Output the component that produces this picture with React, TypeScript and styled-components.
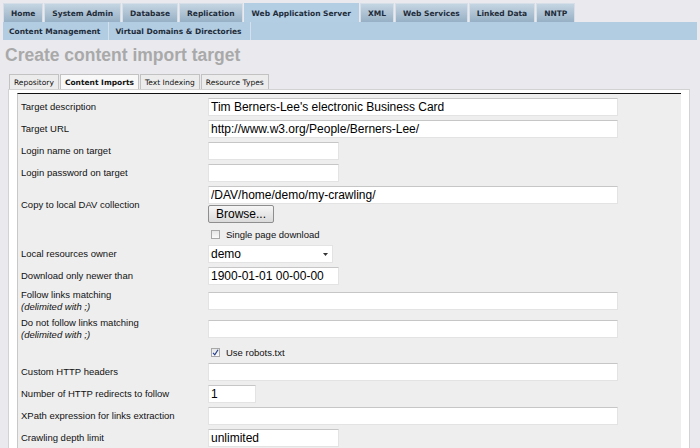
import React from 'react';
import styled, { createGlobalStyle } from 'styled-components';

const Global = createGlobalStyle`
  html, body { margin: 0; padding: 0; background: #eaeaee; }
  body { padding: 3px 3px 0 3px; height: 448px; box-sizing: border-box; overflow: hidden; }
  #root { height: 445px; display: flex; flex-direction: column; }
`;

const TopTabs = styled.div`
  display: flex;
  height: 19px;
  gap: 1px;
  flex: none;
`;

const TopTab = styled.div<{ $active?: boolean }>`
  display: flex;
  align-items: center;
  padding: 0 7px;
  font: bold 7.5px "DejaVu Sans", sans-serif;
  color: #1e2c3a;
  background: ${p => (p.$active ? '#b3cde3' : 'linear-gradient(#c5d5e2, #97b0c5)')};
  border: 1px solid ${p => (p.$active ? '#b3cde3' : '#d6dfe8')};
  border-bottom: none;
`;

const SubBar = styled.div`
  display: flex;
  height: 18px;
  flex: none;
  background: #b2cce2;
`;

const SubTab = styled.div`
  display: flex;
  align-items: center;
  padding: 0 8px 0 6px;
  font: bold 7.5px "DejaVu Sans", sans-serif;
  color: #1e2c3a;
  border-right: 1px solid #d4e1ec;
`;

const Title = styled.h1`
  margin: 4px 0 0 2px;
  font: bold 17.5px "Liberation Sans", Arial, sans-serif;
  color: #a9a9a9;
  line-height: 22px;
  flex: none;
`;

const InnerTabs = styled.div`
  display: flex;
  margin: 8px 0 0 6px;
  height: 15px;
  flex: none;
`;

const InnerTab = styled.div<{ $active?: boolean }>`
  display: flex;
  align-items: center;
  padding: 0 4px;
  font: ${p => (p.$active ? 'bold' : 'normal')} 7.5px "DejaVu Sans", sans-serif;
  color: #111;
  background: ${p => (p.$active ? '#f8f8f8' : '#ececec')};
  border: 1px solid #c2c2c2;
  border-bottom: none;
  margin-right: 1px;
`;

const Panel = styled.div`
  margin-left: 5px;
  width: 682px;
  box-sizing: border-box;
  background: #fff;
  border: 1px solid #d2d2d2;
  border-bottom: none;
  padding: 3px 8px 0 8px;
  flex: 1;
  min-height: 0;
  display: flex;
  flex-direction: column;
  overflow: hidden;
`;

const Form = styled.div`
  flex: 1;
  background: #eeeeee;
  border-top: 1px solid #111;
  border-left: 1px solid #c8c8c8;
  padding: 4px 0 0 3px;
  display: grid;
  grid-template-columns: 187px 1fr;
  row-gap: 4px;
  align-items: center;
  align-content: start;
  overflow: hidden;
`;

const Label = styled.div`
  font: 9.5px/12px "Liberation Sans", Arial, sans-serif;
  color: #111;
`;

const Hint = styled.span`
  font-style: italic;
  display: block;
`;

const Field = styled.div<{ $tall?: boolean }>`
  display: flex;
  flex-direction: column;
  align-items: flex-start;
  min-height: ${p => (p.$tall ? '24px' : '14px')};
  justify-content: center;
`;

const TextInput = styled.input<{ $w: number }>`
  width: ${p => p.$w}px;
  height: 18px;
  box-sizing: border-box;
  margin: 0;
  padding: 0 2px;
  border: 1px solid #e3e3e3;
  border-top-color: #c6c6c6;
  background: #fff;
  font: 12px "Liberation Sans", Arial, sans-serif;
  color: #000;
  outline: none;
`;

const Button = styled.button`
  width: 66px;
  height: 18px;
  margin: 1px 0 0 0;
  padding: 0;
  border: 1px solid #8e8e8e;
  border-radius: 2px;
  background: linear-gradient(#f6f6f6, #dadada);
  font: 12px "Liberation Sans", Arial, sans-serif;
  color: #000;
`;

const Check = styled.label`
  display: flex;
  align-items: center;
  gap: 6px;
  margin-left: 3px;
  font: 9.5px "Liberation Sans", Arial, sans-serif;
  color: #111;
  height: 14px;
`;

const Box = styled.span`
  width: 9px;
  height: 9px;
  box-sizing: border-box;
  border: 1px solid #a8a8a8;
  background: linear-gradient(#e6e6e6, #fafafa);
  display: flex;
  align-items: center;
  justify-content: center;
`;

const Select = styled.div`
  width: 125px;
  height: 18px;
  box-sizing: border-box;
  border: 1px solid #e3e3e3;
  background: #fff;
  display: flex;
  align-items: center;
  justify-content: space-between;
  padding: 0 4px 0 2px;
  font: 12px "Liberation Sans", Arial, sans-serif;
  color: #000;
`;

type Row =
  | { kind: 'input'; label: string; hint?: boolean; w: number; value?: string }
  | { kind: 'check'; label: string; checked: boolean }
  | { kind: 'dav' }
  | { kind: 'select'; label: string; value: string };

const rows: Row[] = [
  { kind: 'input', label: 'Target description', w: 410, value: "Tim Berners-Lee's electronic Business Card" },
  { kind: 'input', label: 'Target URL', w: 410, value: 'http://www.w3.org/People/Berners-Lee/' },
  { kind: 'input', label: 'Login name on target', w: 131 },
  { kind: 'input', label: 'Login password on target', w: 131 },
  { kind: 'dav' },
  { kind: 'check', label: 'Single page download', checked: false },
  { kind: 'select', label: 'Local resources owner', value: 'demo' },
  { kind: 'input', label: 'Download only newer than', w: 131, value: '1900-01-01 00-00-00' },
  { kind: 'input', label: 'Follow links matching', hint: true, w: 410 },
  { kind: 'input', label: 'Do not follow links matching', hint: true, w: 410 },
  { kind: 'check', label: 'Use robots.txt', checked: true },
  { kind: 'input', label: 'Custom HTTP headers', w: 410 },
  { kind: 'input', label: 'Number of HTTP redirects to follow', w: 48, value: '1' },
  { kind: 'input', label: 'XPath expression for links extraction', w: 410 },
  { kind: 'input', label: 'Crawling depth limit', w: 131, value: 'unlimited' },
];

const topTabs = ['Home', 'System Admin', 'Database', 'Replication', 'Web Application Server', 'XML', 'Web Services', 'Linked Data', 'NNTP'];
const innerTabs = ['Repository', 'Content Imports', 'Text Indexing', 'Resource Types'];

export default function App() {
  return (
    <>
      <Global />
      <TopTabs>
        {topTabs.map(t => (
          <TopTab key={t} $active={t === 'Web Application Server'}>{t}</TopTab>
        ))}
      </TopTabs>
      <SubBar>
        <SubTab>Content Management</SubTab>
        <SubTab>Virtual Domains &amp; Directories</SubTab>
      </SubBar>
      <Title>Create content import target</Title>
      <InnerTabs>
        {innerTabs.map(t => (
          <InnerTab key={t} $active={t === 'Content Imports'}>{t}</InnerTab>
        ))}
      </InnerTabs>
      <Panel>
        <Form>
          {rows.map((r, i) => {
            if (r.kind === 'dav') {
              return (
                <React.Fragment key={i}>
                  <Label>Copy to local DAV collection</Label>
                  <Field>
                    <TextInput $w={410} defaultValue="/DAV/home/demo/my-crawling/" readOnly />
                    <Button>Browse...</Button>
                  </Field>
                </React.Fragment>
              );
            }
            if (r.kind === 'check') {
              return (
                <React.Fragment key={i}>
                  <span />
                  <Check>
                    <Box>
                      {r.checked && (
                        <svg width="7" height="7" viewBox="0 0 7 7">
                          <path d="M1 3.8 L2.8 5.8 L6 0.8" fill="none" stroke="#27408b" strokeWidth="1.2" />
                        </svg>
                      )}
                    </Box>
                    {r.label}
                  </Check>
                </React.Fragment>
              );
            }
            if (r.kind === 'select') {
              return (
                <React.Fragment key={i}>
                  <Label>{r.label}</Label>
                  <Field>
                    <Select>
                      {r.value}
                      <svg width="5" height="3" viewBox="0 0 5 3"><path d="M0 0 H5 L2.5 3 Z" fill="#333" /></svg>
                    </Select>
                  </Field>
                </React.Fragment>
              );
            }
            return (
              <React.Fragment key={i}>
                <Label>
                  {r.label}
                  {r.hint && <Hint>(delimited with ;)</Hint>}
                </Label>
                <Field $tall={r.hint}>
                  <TextInput $w={r.w} defaultValue={r.value ?? ''} readOnly />
                </Field>
              </React.Fragment>
            );
          })}
        </Form>
      </Panel>
    </>
  );
}
